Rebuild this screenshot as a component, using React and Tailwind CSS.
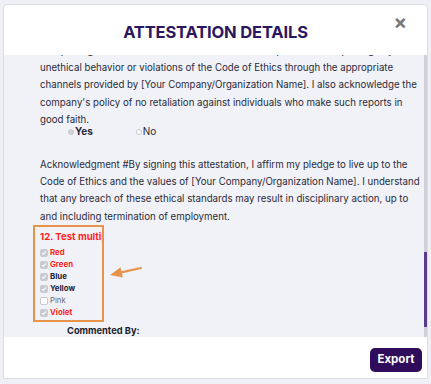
import React from "react";

const items = [
  { label: "Red", checked: true, color: "text-[#ff1f1f] font-bold" },
  { label: "Green", checked: true, color: "text-[#ff1f1f] font-bold" },
  { label: "Blue", checked: true, color: "text-[#1c1c33] font-bold" },
  { label: "Yellow", checked: true, color: "text-[#1c1c33] font-bold" },
  { label: "Pink", checked: false, color: "text-[#6a6a7a]" },
  { label: "Violet", checked: true, color: "text-[#ff1f1f] font-bold" },
];

const Check = ({ checked }) =>
  checked ? (
    <span className="w-[8px] h-[8px] shrink-0 rounded-[2px] bg-[#cacad0] flex items-center justify-center">
      <svg width="6" height="6" viewBox="0 0 10 10">
        <path d="M2 5.2l2 2 4-4.4" fill="none" stroke="#fff" strokeWidth="1.8" />
      </svg>
    </span>
  ) : (
    <span className="w-[8px] h-[8px] shrink-0 rounded-[2px] bg-white border border-[#c9c9cf]" />
  );

const App = () => {
  return (
    <div className="w-[431px] h-[384px] bg-[#eef0f5] pt-[4px] px-[3px] overflow-hidden font-[Inter,sans-serif]">
      <div className="bg-white border border-[#dcdde3] rounded-t-[4px] h-[375px] flex flex-col">
        {/* Header */}
        <div className="relative h-[50px] shrink-0 flex items-center justify-center">
          <h1 className="text-[16.5px] font-bold text-[#2a1760] tracking-[-0.15px] mt-[4px]">
            ATTESTATION DETAILS
          </h1>
          <span className="absolute right-[20px] top-[7px] text-[#7a7a7a] text-[20px] font-bold leading-none">
            ×
          </span>
        </div>

        {/* Body */}
        <div className="relative h-[282px] shrink-0 flex bg-[#f1f2f7] overflow-hidden">
          <div className="flex-1 min-w-0 pl-[36px] text-[9.7px] leading-[17.2px] text-[#2a2a3a] -mt-[13px] whitespace-nowrap">
            <p className="overflow-hidden">
              to reporting and non-retaliation: I understand the importance of reporting any
            </p>
            <p>
              unethical behavior or violations of the Code of Ethics through the appropriate
              <br />
              channels provided by [Your Company/Organization Name]. I also acknowledge the
              <br />
              company's policy of no retaliation against individuals who make such reports in
              <br />
              good faith.
            </p>
            <div className="flex items-center pl-[28px] text-[10px] h-[10px] -mt-[1px]">
              <span className="w-[6px] h-[6px] rounded-full border border-[#c4c4cc] bg-[#d4d4da] mr-[1px]" />
              <span className="font-bold text-[#2a2a3a]">Yes</span>
              <span className="w-[6px] h-[6px] rounded-full border border-[#c4c4cc] bg-white ml-[43px] mr-[1px]" />
              <span className="text-[#2a2a3a]">No</span>
            </div>
            <p className="mt-[19px]">
              Acknowledgment #By signing this attestation, I affirm my pledge to live up to the
              <br />
              Code of Ethics and the values of [Your Company/Organization Name]. I understand
              <br />
              that any breach of these ethical standards may result in disciplinary action, up to
              <br />
              and including termination of employment.
            </p>

            <div className="-ml-[7px] w-[71px] border-2 border-[#e8934c] pl-[5px] pt-[4px] pb-[1px] overflow-hidden">
              <div className="text-[9.6px] font-bold text-[#ff1f1f] leading-[12px]">
                12. Test multiple choice
              </div>
              <div className="flex flex-col mt-[4px]">
                {items.map((it) => (
                  <div key={it.label} className="flex items-center gap-[2px] h-[12px]">
                    <Check checked={it.checked} />
                    <span className={`text-[7.8px] leading-none ${it.color}`}>{it.label}</span>
                  </div>
                ))}
              </div>
            </div>

            <div className="ml-[27px] mt-[3px] text-[9.3px] leading-[12px] font-bold text-[#1c1c2e]">
              Commented By:
            </div>
          </div>

          {/* Arrow annotation */}
          <svg className="absolute left-0 top-0" width="160" height="282" viewBox="0 0 160 282">
            <path d="M137 213 L116 217.6" stroke="#e8934c" strokeWidth="2.2" fill="none" strokeLinecap="round" />
            <path d="M106 220 L116.6 212.3 L118.8 222.4 Z" fill="#e8934c" />
          </svg>

          {/* Scrollbar */}
          <div className="w-[3px] shrink-0 flex flex-col bg-[#cfd0d8]">
            <div className="h-[197px]" />
            <div className="h-[75px] bg-[#5b3b8c]" />
          </div>
        </div>

        {/* Footer */}
        <div className="flex-1 flex items-start justify-end pt-[11px] pr-[5px]">
          <button className="w-[52px] h-[24px] rounded-[5px] bg-[#2f0d5c] text-white text-[11.5px] font-bold">
            Export
          </button>
        </div>
      </div>
    </div>
  );
};

export default App;
